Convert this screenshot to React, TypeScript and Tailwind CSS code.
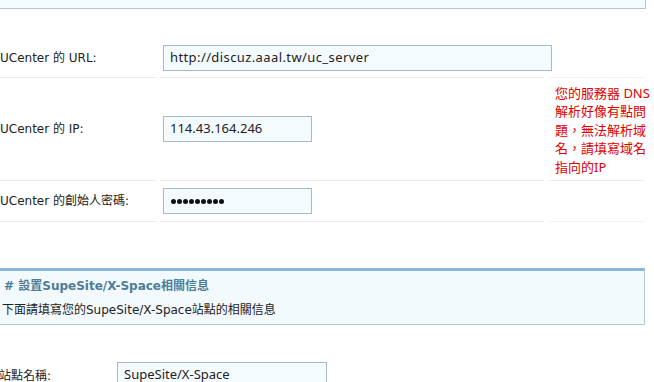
export default function App() {
  const dots = Array.from({ length: 9 });
  return (
    <div className="w-[654px] h-[382px] overflow-hidden bg-white text-[12px] text-[#222] font-['Tahoma','DejaVu_Sans','Noto_Sans_CJK_TC',sans-serif]">
      {/* tail of the previous panel */}
      <div className="h-[9px] w-[646px] bg-[#f2fbfe] border-b border-r border-[#b6c6cf]" />

      {/* UCenter table */}
      <div className="mt-[30px] flex flex-col">
        {/* URL */}
        <div className="flex h-[39px]">
          <div className="w-[157px] shrink-0 flex items-center border-b border-[#ededed]">UCenter 的 URL:</div>
          <div className="ml-[3px] w-[384px] shrink-0 flex items-center border-b border-[#ededed]">
            <div className="ml-[3px] w-[389px] h-[26px] shrink-0 flex items-center px-[6px] bg-[#f4fbff] border border-[#aab9c2] text-[13px] tracking-[0.4px] font-['Noto_Sans','DejaVu_Sans',sans-serif]">
              http://discuz.aaal.tw/uc_server
            </div>
          </div>
          <div className="ml-[5px] w-[96px] shrink-0 border-b border-[#f3f3f3]" />
        </div>

        {/* IP */}
        <div className="flex h-[103px]">
          <div className="w-[157px] shrink-0 flex items-center border-b border-[#ededed]">UCenter 的 IP:</div>
          <div className="ml-[3px] w-[384px] shrink-0 flex items-center border-b border-[#ededed]">
            <div className="ml-[3px] w-[149px] h-[26px] flex items-center px-[6px] bg-[#f4fbff] border border-[#aab9c2] text-[13px] font-['Noto_Sans','DejaVu_Sans',sans-serif]">
              114.43.164.246
            </div>
          </div>
          <div className="ml-[5px] w-[96px] shrink-0 flex items-center pl-[6px] pt-[2px] border-b border-[#ededed] text-[13px] leading-[18.5px] text-[#e00000] whitespace-nowrap font-['Noto_Sans','Noto_Sans_CJK_TC',sans-serif]">
            <p>
              您的服務器 DNS
              <br />
              解析好像有點問
              <br />
              題，無法解析域
              <br />
              名，請填寫域名
              <br />
              指向的IP
            </p>
          </div>
        </div>

        {/* password */}
        <div className="flex h-[41px]">
          <div className="w-[157px] shrink-0 flex items-center border-b border-[#ededed]">UCenter 的創始人密碼:</div>
          <div className="ml-[3px] w-[384px] shrink-0 flex items-center border-b border-[#ededed]">
            <div className="ml-[3px] w-[149px] h-[26px] flex items-center gap-[1px] px-[7px] bg-[#f4fbff] border border-[#aab9c2]">
              {dots.map((_, i) => (
                <span key={i} className="w-[5px] h-[5px] rounded-full bg-[#111]" />
              ))}
            </div>
          </div>
          <div className="ml-[5px] w-[96px] shrink-0 border-b border-[#f3f3f3]" />
        </div>
      </div>

      {/* SupeSite section */}
      <div className="mt-[46px] w-[645px] h-[57px] bg-[#f2fafd] border-t-[3px] border-t-[#88b8d2] border-r border-b border-r-[#b6c6cf] border-b-[#b6c6cf] flex flex-col">
        <h3 className="pl-[4px] pt-[6px] h-[24px] font-bold text-[#4d7c97]"># 設置SupeSite/X-Space相關信息</h3>
        <p className="pl-[2px] pt-[6px]">下面請填寫您的SupeSite/X-Space站點的相關信息</p>
      </div>

      {/* site name */}
      <div className="mt-[37px] flex items-start">
        <div className="w-[118px] pt-[5px] -ml-[1px]">站點名稱:</div>
        <div className="w-[210px] h-[26px] flex items-center px-[6px] bg-[#f4fbff] border border-[#aab9c2] text-[13px] font-['Noto_Sans','DejaVu_Sans',sans-serif]">
          SupeSite/X-Space
        </div>
      </div>
    </div>
  );
}
